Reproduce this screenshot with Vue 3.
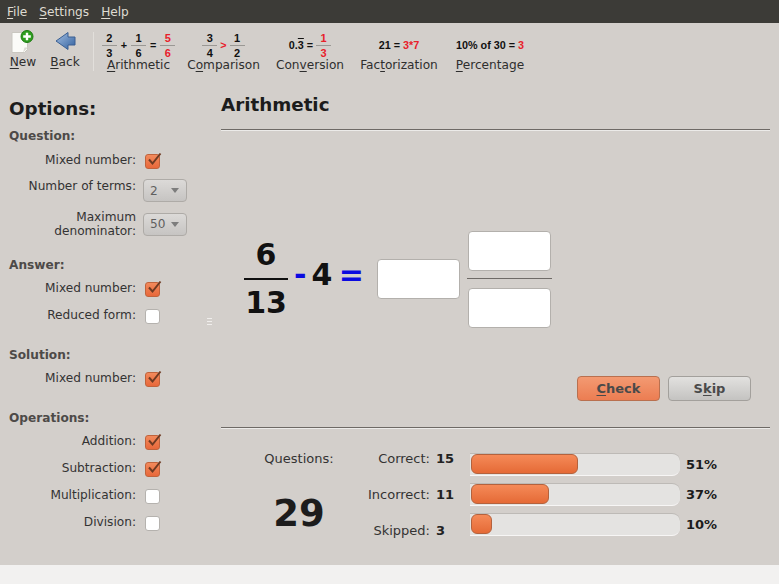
<script setup>
const exercises = [
  { name: 'Arithmetic', pre: '', key: 'A', post: 'rithmetic', kind: 'arith' },
  { name: 'Comparison', pre: 'C', key: 'o', post: 'mparison', kind: 'comp' },
  { name: 'Conversion', pre: 'Con', key: 'v', post: 'ersion', kind: 'conv' },
  { name: 'Factorization', pre: 'Fac', key: 't', post: 'orization', kind: 'fact' },
  { name: 'Percentage', pre: '', key: 'P', post: 'ercentage', kind: 'perc' }
]
const groups = [
  { title: 'Question:', cls: 'g-question', rows: [
    { label: 'Mixed number:', on: true },
    { label: 'Number of terms:', select: '2' },
    { label: 'Maximum denominator:', select: '50', tall: true }
  ] },
  { title: 'Answer:', cls: 'g-answer', rows: [
    { label: 'Mixed number:', on: true },
    { label: 'Reduced form:', on: false }
  ] },
  { title: 'Solution:', cls: 'g-solution', rows: [
    { label: 'Mixed number:', on: true }
  ] },
  { title: 'Operations:', cls: 'g-operations', rows: [
    { label: 'Addition:', on: true },
    { label: 'Subtraction:', on: true },
    { label: 'Multiplication:', on: false },
    { label: 'Division:', on: false }
  ] }
]
const scores = [
  { label: 'Correct:', value: 15 },
  { label: 'Incorrect:', value: 11 },
  { label: 'Skipped:', value: 3 }
]
const bars = [
  { pct: '51%', width: 107 },
  { pct: '37%', width: 78 },
  { pct: '10%', width: 21 }
]
</script>

<template>
  <div class="window">
    <nav class="menubar">
      <span><u>F</u>ile</span>
      <span><u>S</u>ettings</span>
      <span><u>H</u>elp</span>
    </nav>

    <header class="toolbar">
      <button class="tool tool-new">
        <svg width="30" height="30" viewBox="0 0 30 30">
          <path d="M4 3.5h11l4.500 4v13l-3 3H4z" fill="#fbfbf8" stroke="#c9c7c0" />
          <path d="M15 23.500l1.500-5h3.500z" fill="#dcdad3" />
          <circle cx="19" cy="7.500" r="6" fill="#2f9e1f" stroke="#1d7a12" />
          <path d="M19 3.700v7.600M15.200 7.500h7.600" stroke="#fff" stroke-width="2.400" />
        </svg>
        <span><u>N</u>ew</span>
      </button>
      <button class="tool tool-back">
        <svg width="30" height="30" viewBox="0 0 30 30">
          <defs>
            <linearGradient id="arrowFill" x1="0" y1="0" x2="1" y2="1">
              <stop offset="0" stop-color="#a6c0e2" />
              <stop offset="1" stop-color="#2f5f9e" />
            </linearGradient>
          </defs>
          <path d="M6 12L18 3.500V8h7v8h-7v4.500z" fill="url(#arrowFill)" stroke="#3a5f92" stroke-linejoin="round" />
        </svg>
        <span><u>B</u>ack</span>
      </button>
      <div class="tool-sep"></div>
      <button v-for="ex in exercises" :key="ex.name" class="exercise" :class="'ex-' + ex.kind">
        <div class="mini">
          <template v-if="ex.kind === 'arith'">
            <span class="mf"><b>2</b><b>3</b></span><em>+</em>
            <span class="mf"><b>1</b><b>6</b></span><em>=</em>
            <span class="mf red"><b>5</b><b>6</b></span>
          </template>
          <template v-else-if="ex.kind === 'comp'">
            <span class="mf"><b>3</b><b>4</b></span><em class="red">&gt;</em>
            <span class="mf"><b>1</b><b>2</b></span>
          </template>
          <template v-else-if="ex.kind === 'conv'">
            <em>0.<span class="over">3</span> =</em>
            <span class="mf red"><b>1</b><b>3</b></span>
          </template>
          <template v-else-if="ex.kind === 'fact'">
            <em>21 = <span class="red">3*7</span></em>
          </template>
          <template v-else>
            <em>10% of 30 = <span class="red">3</span></em>
          </template>
        </div>
        <span class="ex-label">{{ ex.pre }}<u>{{ ex.key }}</u>{{ ex.post }}</span>
      </button>
    </header>

    <div class="body">
      <aside class="options">
        <h2>Options:</h2>
        <section v-for="g in groups" :key="g.title" class="group" :class="g.cls">
          <h3>{{ g.title }}</h3>
          <div v-for="r in g.rows" :key="r.label" class="row" :class="{ 'row-select': r.select, 'row-tall': r.tall }">
            <label>{{ r.label }}</label>
            <span v-if="r.select" class="select">
              <span>{{ r.select }}</span><i></i>
            </span>
            <span v-else class="check" :class="{ on: r.on }">
              <svg v-if="r.on" width="17" height="16" viewBox="0 0 17 16">
                <path d="M4 7.500l3.500 4L15.500 1.500" fill="none" stroke="#6e3a22" stroke-width="2" />
              </svg>
            </span>
          </div>
        </section>
      </aside>

      <div class="handle"><i></i><i></i><i></i></div>

      <main class="content">
        <h1>Arithmetic</h1>
        <div class="rule"></div>

        <div class="equation">
          <div class="frac">
            <span class="frac-top">6</span>
            <span class="frac-bottom">13</span>
          </div>
          <span class="op op-minus">-</span>
          <span class="whole">4</span>
          <span class="op op-eq">=</span>
          <div class="field field-whole"></div>
          <div class="answer-frac">
            <div class="field"></div>
            <div class="answer-line"></div>
            <div class="field"></div>
          </div>
        </div>

        <div class="actions">
          <button class="btn btn-check"><u>C</u>heck</button>
          <button class="btn btn-skip">S<u>k</u>ip</button>
        </div>
        <div class="rule"></div>

        <div class="stats">
          <div class="total">
            <span>Questions:</span>
            <strong>29</strong>
          </div>
          <div class="scores">
            <div v-for="s in scores" :key="s.label" class="score">
              <label>{{ s.label }}</label><b>{{ s.value }}</b>
            </div>
          </div>
          <div class="bars">
            <div v-for="b in bars" :key="b.pct" class="bar-row">
              <div class="track">
                <div class="fill" :style="{ width: b.width + 'px' }"></div>
              </div>
              <b>{{ b.pct }}</b>
            </div>
          </div>
        </div>
      </main>
    </div>
    <div class="statusbar"></div>
  </div>
</template>

<style>
html, body { margin: 0; padding: 0; background: #f2f1f0; }
</style>

<style scoped>
.window {
  width: 779px;
  height: 584px;
  display: flex;
  flex-direction: column;
  overflow: hidden;
  background: #d3cfcb;
  color: #2e2e2e;
  font-family: "DejaVu Sans", sans-serif;
  font-size: 12.15px;
}
u { text-underline-offset: 2px; text-decoration-thickness: 1px; }
button { font-family: inherit; border: 0; background: none; padding: 0; color: inherit; }

.menubar {
  height: 23px;
  flex: none;
  display: flex;
  align-items: center;
  gap: 12px;
  padding-left: 7px;
  background: #3c3b37;
  color: #dfdbd2;
  font-size: 12.15px;
}

.toolbar {
  height: 65px;
  flex: none;
  display: flex;
  align-items: flex-start;
  box-sizing: border-box;
}
.tool {
  display: flex;
  flex-direction: column;
  align-items: center;
  width: 30px;
  height: 49px;
  margin-top: 6px;
  font-size: 12.15px;
}
.tool svg { flex: none; }
.tool span { margin-top: -4px; }
.tool-new { margin-left: 8px; }
.tool-back { margin-left: 12px; }
.tool-sep {
  width: 1px;
  height: 39px;
  margin: 9px 13px 0 13px;
  background: #e2dfdb;
}
.exercise {
  display: flex;
  flex-direction: column;
  align-items: center;
  font-size: 12.15px;
  margin-top: 9px;
}
.mini {
  height: 26px;
  display: flex;
  align-items: center;
  justify-content: center;
  gap: 3px;
  white-space: nowrap;
  font-family: "Liberation Sans", sans-serif;
  font-weight: 700;
  font-size: 10.8px;
  color: #111;
}
.ex-arith .mini { gap: 4px; }
.mini em { font-style: normal; }
.mf {
  display: flex;
  flex-direction: column;
  align-items: center;
  width: 15px;
  font-size: 11px;
  line-height: 14px;
}
.mf b:first-child { border-bottom: 1px solid #9a9894; width: 100%; text-align: center; }
.red { color: #e8202a; }
.over { text-decoration: overline; }
.ex-label { margin-top: -1px; line-height: 16px; }
.ex-arith { width: 63px; }
.ex-comp { margin-left: 18px; width: 71px; }
.ex-conv { margin-left: 18px; width: 66px; }
.ex-fact { margin-left: 18px; width: 76px; }
.ex-perc { margin-left: 19px; width: 68px; }

.body { flex: 1; display: flex; min-height: 0; }

.options {
  width: 207px;
  flex: none;
  box-sizing: border-box;
  padding-left: 9px;
}
.options h2 {
  margin: 10px 0 0;
  font-size: 18.3px;
  line-height: 22px;
  color: #1c1c1c;
}
.group h3 {
  margin: 0;
  font-size: 12.15px;
  line-height: 16px;
  color: #4d4a48;
}
.g-question { margin-top: 8px; }
.g-answer { margin-top: 17px; }
.g-solution { margin-top: 19px; }
.g-operations { margin-top: 19px; }
.row {
  display: flex;
  align-items: center;
  height: 27px;
}
.group h3 + .row { margin-top: 1px; }
.g-question h3 + .row { margin-top: 2px; }
.row label {
  width: 127px;
  flex: none;
  text-align: right;
  line-height: 14px;
  font-size: 12.15px;
  color: #333;
}
.row-select { height: 31px; margin-top: 2px; margin-bottom: 1px; }
.row-select label { margin-bottom: 10px; }
.row-tall { height: 32px; margin-bottom: 0; }
.row-tall label { margin-bottom: 0; }
.check {
  width: 15px;
  height: 15px;
  margin-left: 9px;
  margin-top: 3px;
  box-sizing: border-box;
  border: 1px solid #b5b2ae;
  border-radius: 3px;
  background: #fff;
  position: relative;
  flex: none;
}
.check.on {
  background: linear-gradient(#f28a5c, #e8683a);
  border-color: #c0633c;
}
.check svg { position: absolute; left: -1px; top: -3px; }
.select {
  width: 44px;
  height: 23px;
  margin-left: 7px;
  box-sizing: border-box;
  padding: 0 7px 0 6px;
  display: flex;
  align-items: center;
  justify-content: space-between;
  border: 1px solid #aeaba7;
  border-radius: 4px;
  background: linear-gradient(#dcdad8, #c6c4c2);
  color: #5f5f5f;
  font-size: 12.15px;
  flex: none;
}
.select i {
  width: 0;
  height: 0;
  border-left: 4px solid transparent;
  border-right: 4px solid transparent;
  border-top: 5px solid #7d7d7d;
}

.handle {
  width: 8px;
  flex: none;
  display: flex;
  flex-direction: column;
  justify-content: center;
  gap: 2px;
  margin-bottom: 11px;
  box-sizing: border-box;
}
.handle i { display: block; height: 1px; width: 5px; background: #f0eeec; }

.content {
  flex: 1;
  min-width: 0;
  display: flex;
  flex-direction: column;
  margin-left: 6px;
  margin-right: 9px;
}
.content h1 {
  margin: 6px 0 0;
  font-size: 18.3px;
  line-height: 22px;
  height: 48px;
  color: #1c1c1c;
}
.rule {
  height: 1px;
  flex: none;
  background: #6e6a66;
  border-bottom: 1px solid #ecebe9;
}

.equation {
  height: 245px;
  flex: none;
  display: flex;
  align-items: center;
  font-weight: 700;
  color: #111;
  padding: 51px 0 0 23px;
  box-sizing: border-box;
}
.frac {
  width: 44px;
  display: flex;
  flex-direction: column;
  align-items: center;
  font-size: 30px;
}
.frac-top {
  width: 100%;
  height: 34px;
  line-height: 22px;
  text-align: center;
  border-bottom: 2px solid #111;
}
.frac-bottom {
  height: 34px;
  line-height: 46px;
}
.op { color: #0a0ae0; font-size: 30px; line-height: 36px; margin-bottom: 9px; }
.op-minus { margin-left: 6px; }
.whole { font-size: 30px; margin-left: 5px; line-height: 36px; margin-bottom: 9px; }
.op-eq { margin-left: 6.500px; }
.field {
  width: 83px;
  height: 40px;
  box-sizing: border-box;
  border: 1px solid #b3b0ac;
  border-radius: 4px;
  background: #fff;
  flex: none;
}
.field-whole { margin-left: 13px; }
.answer-frac {
  display: flex;
  flex-direction: column;
  align-items: center;
  margin-left: 7px;
  width: 85px;
}
.answer-line {
  height: 1px;
  width: 85px;
  margin: 7px 0 9px;
  background: #6e6a66;
}

.actions {
  height: 51px;
  flex: none;
  display: flex;
  justify-content: flex-end;
  gap: 8px;
  padding-right: 19px;
}
.btn {
  width: 83px;
  height: 25px;
  border-radius: 4px;
  font-size: 13px;
  font-weight: 700;
  box-sizing: border-box;
  color: #4a4a4a;
}
.btn-check {
  background: linear-gradient(#f39a72, #ec7d52);
  border: 1px solid #b9704f;
}
.btn-skip {
  background: linear-gradient(#e2e1df, #c4c3c1);
  border: 1px solid #a3a09c;
}

.stats {
  display: flex;
  height: 136px;
  flex: none;
}
.total {
  width: 156px;
  flex: none;
  display: flex;
  flex-direction: column;
  align-items: center;
  padding-top: 22px;
  box-sizing: border-box;
}
.total span { line-height: 16px; font-size: 13px; color: #333; }
.total strong {
  margin-top: 24px;
  font-size: 37px;
  line-height: 46px;
  color: #1c1c1c;
}
.scores {
  width: 77px;
  flex: none;
  padding-top: 22px;
  display: flex;
  flex-direction: column;
  gap: 20px;
  margin-left: -24px;
}
.score {
  display: flex;
  height: 16px;
  line-height: 16px;
  white-space: nowrap;
}
.score label {
  width: 77px;
  flex: none;
  text-align: right;
  font-size: 13px;
  color: #333;
}
.score b { margin-left: 6px; color: #222; font-size: 13px; }
.bars {
  margin-left: 40px;
  padding-top: 24px;
  display: flex;
  flex-direction: column;
  gap: 7px;
}
.bar-row { display: flex; align-items: center; }
.track {
  width: 210px;
  height: 23px;
  box-sizing: border-box;
  padding: 0 0 0 1px;
  background: #e4e3e1;
  border-top: 1px solid #bdbab6;
  border-bottom: 1px solid #f7f6f5;
  border-radius: 0 8px 8px 0;
}
.fill {
  height: 20px;
  box-sizing: border-box;
  border: 1px solid #b4623d;
  border-radius: 6px;
  background: linear-gradient(#f58a58, #e56a36);
}
.bar-row b { margin-left: 6px; font-size: 13px; color: #1c1c1c; }

.statusbar { height: 19px; flex: none; background: #f2f1f0; }
</style>
